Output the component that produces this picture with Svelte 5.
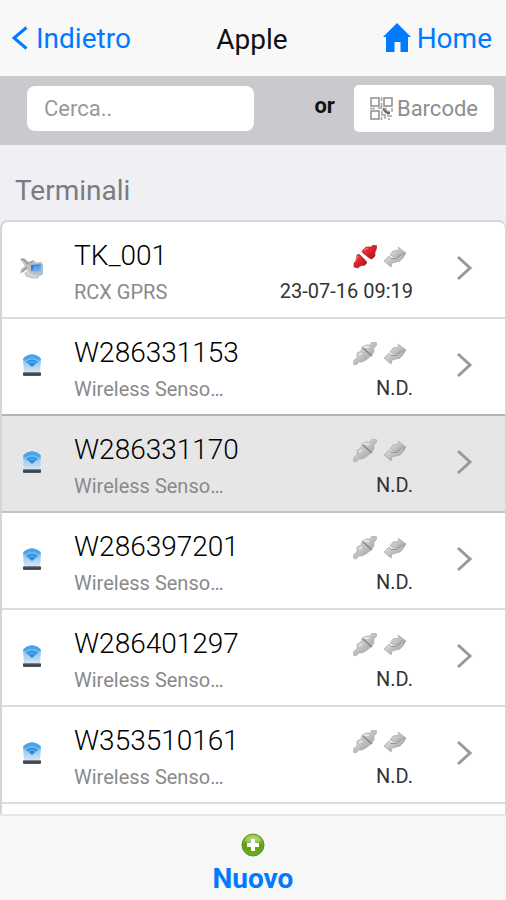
<script>
  const terminals = [
    { name: 'TK_001', type: 'RCX GPRS', seen: '23-07-16 09:19', gprs: true },
    { name: 'W286331153', type: 'Wireless Senso…', seen: 'N.D.' },
    { name: 'W286331170', type: 'Wireless Senso…', seen: 'N.D.', active: true },
    { name: 'W286397201', type: 'Wireless Senso…', seen: 'N.D.' },
    { name: 'W286401297', type: 'Wireless Senso…', seen: 'N.D.' },
    { name: 'W353510161', type: 'Wireless Senso…', seen: 'N.D.' }
  ];
</script>

<svg class="defs" width="0" height="0" aria-hidden="true">
  <defs>
    <linearGradient id="silver" x1="0" y1="0" x2="1" y2="1">
      <stop offset="0" stop-color="#e6e6e6" />
      <stop offset="0.5" stop-color="#c0c0c0" />
      <stop offset="1" stop-color="#8c8c8c" />
    </linearGradient>
    <linearGradient id="red" x1="0" y1="0" x2="1" y2="1">
      <stop offset="0" stop-color="#f0505c" />
      <stop offset="0.5" stop-color="#d8202c" />
      <stop offset="1" stop-color="#a81420" />
    </linearGradient>
    <linearGradient id="sky" x1="0" y1="0" x2="0" y2="1">
      <stop offset="0" stop-color="#3b9de8" />
      <stop offset="0.4" stop-color="#8cc8f4" />
      <stop offset="1" stop-color="#dde8f2" />
    </linearGradient>
    <linearGradient id="base" x1="0" y1="0" x2="0" y2="1">
      <stop offset="0" stop-color="#8f979f" />
      <stop offset="0.5" stop-color="#33383e" />
      <stop offset="1" stop-color="#5c6268" />
    </linearGradient>
    <linearGradient id="screen" x1="0" y1="0" x2="1" y2="1">
      <stop offset="0" stop-color="#1d68cc" />
      <stop offset="1" stop-color="#8cc4f4" />
    </linearGradient>
    <linearGradient id="green" x1="0" y1="0" x2="0" y2="1">
      <stop offset="0" stop-color="#a9cf5c" />
      <stop offset="0.5" stop-color="#5f9e16" />
      <stop offset="1" stop-color="#6fae1c" />
    </linearGradient>
  </defs>
</svg>

<div class="page">
  <header>
    <a class="nav" href="#back">
      <svg width="16" height="26" viewBox="0 0 16 26"><path d="M14.500 1.500 2 12l12.500 10.500" fill="none" stroke="#007aff" stroke-width="3" /></svg>
      Indietro
    </a>
    <h1>Apple</h1>
    <a class="nav home" href="#home">
      <svg width="28" height="32" viewBox="0 0 28 32"><path d="M14 0 28 14H25V29H17.500V19H11.500V29H3V14H0Z" fill="#007aff" /></svg>
      Home
    </a>
  </header>

  <form class="tools">
    <input type="search" placeholder="Cerca.." aria-label="Cerca" />
    <span>or</span>
    <button type="button" class="barcode">
      <svg width="23" height="23" viewBox="0 0 23 23" fill="none" stroke="#8d8d8d" stroke-width="1.500">
        <path d="M1 1h8v8H1ZM14 1h8v8h-8ZM1 14h8v8H1Z" />
        <path d="M11.500 0v4M11.500 6v5H8M13 11.500h3v3h4M22 11v4M12 14v4h3v4M18 17v2h4M18 22h2M0 11.500h5M11.500 20v3" stroke="#a4a4a4" />
        <path d="M13 12l4 4M17 16h3" stroke="#666" stroke-width="2" />
      </svg>
      Barcode
    </button>
  </form>

  <main>
    <h2>Terminali</h2>
    <ul>
      {#each terminals as t}
        <li class:active={t.active}>
          <a class="row" href="#{t.name}">
            <span class="device">
              {#if t.gprs}
                <svg width="24" height="24" viewBox="0 0 24 24">
                  <path d="M0 3 4 2 9 6 13 4 16 6 12 10 11 14 6 14 0 18 1 13 5 10Z" fill="#c3c3c0" />
                  <path d="M1 3 4 4 8 8 13 5M2 16 7 11" fill="none" stroke="#8f908a" stroke-width="1.200" />
                  <path d="M5 17 10 14 19 18 18 22 13 22 6 20Z" fill="#d3d5d4" stroke="#b3b5b4" stroke-width="0.800" />
                  <path d="M9 7 21 6 23 8 23 18 20 20 10 17Z" fill="#b4bfca" />
                  <path d="M11 9 21 8V16L11 15Z" fill="url(#screen)" />
                  <path d="M15 10V14M12 15 16 16" stroke="#8fc0ee" stroke-width="1" />
                </svg>
              {:else}
                <svg width="24" height="24" viewBox="0 0 24 24">
                  <path d="M3 6C7 0 17 0 21 6L20 20H4Z" fill="url(#sky)" />
                  <path d="M3 6C7 0 17 0 21 6L19 8C15 4 9 4 5 8Z" fill="#48a7ec" />
                  <path d="M6 9C10 6 14 6 18 9L12 14Z" fill="#328bdc" />
                  <path d="M8 10.500C11 8.500 13 8.500 16 10.500" fill="none" stroke="#6db6ee" />
                  <rect x="3" y="19" width="18" height="4" rx="1" fill="url(#base)" />
                </svg>
              {/if}
            </span>
            <span class="text">
              <strong>{t.name}</strong>
              <small>{t.type}</small>
            </span>
            <span class="status">
              <span class="icons">
                {#if t.gprs}
                  <svg width="24" height="24" viewBox="0 0 24 24" fill="url(#red)" stroke="#a51822" stroke-width="0.600">
                    <path d="M10 5 13 2 18 2 20 0 24 1 23 5 22 7 22 11 19 14Q17 14 15 12L10 8Q8 6 10 5Z" />
                    <path d="M4 10Q6 8 8 11L13 16Q15 18 12 20L7 21 5 23 1 22 1 18 3 16Z" />
                    <path d="M11 5 15 3M5 11 3 15" stroke="#f4747c" stroke-width="1.300" />
                  </svg>
                {:else}
                  <svg width="24" height="24" viewBox="0 0 24 24" fill="url(#silver)" stroke="#b0b0b0" stroke-width="0.700">
                    <path d="M9 5 13 3 17 3 19 0 23 0 24 3 21 6 21 10 18 14 13 18 9 20 6 20 3 23 0 22 1 18 4 16 4 11 8 9Z" />
                    <path d="M10 6 19 14" fill="none" stroke="#858585" stroke-width="1.500" />
                    <path d="M11 5 16 5M6 13 9 11" fill="none" stroke="#f0f0f0" stroke-width="1.500" />
                  </svg>
                {/if}
                <svg width="24" height="24" viewBox="0 0 24 24" fill="url(#silver)" stroke="#a6a6a6" stroke-width="0.700">
                  <path d="M7 10 10 6 16 5 15 2 23 8 19 14 17 11 11 12Z" />
                  <path d="M1 16 6 11 8 13 13 13 18 9 21 11 17 16 9 18 8 22Z" />
                  <path d="M8 13.500 13 13.500 18 10" fill="none" stroke="#808080" />
                </svg>
              </span>
              <time>{t.seen}</time>
            </span>
            <svg class="chevron" width="18" height="30" viewBox="0 0 18 30"><path d="M2 2 14 13 2 24" fill="none" stroke="#999" stroke-width="3" /></svg>
          </a>
        </li>
      {/each}
    </ul>
  </main>

  <footer>
    <button type="button" class="new">
      <svg width="24" height="24" viewBox="0 0 24 24">
        <circle cx="12" cy="12" r="11" fill="url(#green)" stroke="#5c941c" />
        <path d="M4 8C7 2 17 2 20 8 15 11 9 11 4 8Z" fill="#fff" opacity="0.300" />
        <path d="M12 6V18M6 12H18" stroke="#fff" stroke-width="4" />
      </svg>
      Nuovo
    </button>
  </footer>
</div>

<style>
  :global(body) {
    margin: 0;
  }
  .page,
  .page * {
    box-sizing: border-box;
  }
  .defs {
    position: absolute;
  }
  .page {
    display: flex;
    flex-direction: column;
    height: 100vh;
    font: 400 28px/36px Roboto, 'Liberation Sans', sans-serif;
    color: #111;
    background: #efeff4;
  }
  svg {
    display: block;
    flex: none;
  }
  a {
    color: inherit;
    text-decoration: none;
  }
  header {
    flex: none;
    display: grid;
    grid-template-columns: 1fr auto 1fr;
    align-items: center;
    height: 76px;
    padding: 4px 14px 0 12px;
    background: #f8f8f8;
  }
  .nav {
    display: flex;
    align-items: center;
    gap: 8px;
    padding-bottom: 2px;
    color: #007aff;
  }
  .home {
    justify-self: end;
    gap: 6px;
  }
  h1,
  h2 {
    margin: 0;
    font-size: 28px;
    font-weight: 400;
  }
  .tools {
    flex: none;
    display: flex;
    align-items: center;
    height: 69px;
    padding: 0 12px 4px 27px;
    background: #c9c9ce;
    font-size: 22px;
  }
  .tools input {
    flex: 0 1 227px;
    min-width: 0;
    height: 45px;
    padding: 0 17px;
    border: 0;
    border-radius: 8px;
    background: #fff;
    font: inherit;
    appearance: none;
  }
  .tools input::placeholder {
    color: #999;
    opacity: 1;
  }
  .tools span {
    margin-left: auto;
    padding: 0 19px 6px 0;
    font-weight: 700;
  }
  .barcode {
    display: flex;
    align-items: center;
    gap: 4px;
    height: 47px;
    padding: 0 16px;
    border: 0;
    border-radius: 5px;
    background: #fff;
    color: #8e8e8e;
    font: inherit;
  }
  main {
    flex: 1;
    display: flex;
    flex-direction: column;
    min-height: 0;
    overflow: hidden;
  }
  h2 {
    flex: none;
    padding: 28px 15px 11px;
    color: #7b7b80;
  }
  ul {
    flex: 1 0 auto;
    margin: 0;
    padding: 0;
    list-style: none;
    background: #fff;
    border: 2px solid #d6d6d9;
    border-width: 2px 1px 0 2px;
    border-radius: 8px 8px 0 0;
  }
  li {
    height: 97px;
    border-bottom: 2px solid #dcdcdc;
  }
  .active {
    margin-top: -2px;
    height: 99px;
    background: #e6e6e6;
    border-top: 2px solid #b4b4b4;
    border-bottom-color: #c2c2c2;
  }
  .row {
    display: flex;
    align-items: center;
    height: 95px;
    padding: 0 31px 0 18px;
  }
  .device {
    width: 54px;
    padding-bottom: 4px;
  }
  .text {
    flex: 1;
    display: flex;
    flex-direction: column;
    gap: 4px;
    min-width: 0;
    padding-top: 4px;
  }
  strong {
    font-weight: 300;
    line-height: 36px;
    color: #000;
  }
  small {
    color: #8a8a8a;
    font-size: 20px;
    line-height: 28px;
  }
  .status {
    display: flex;
    flex-direction: column;
    align-items: flex-end;
    gap: 8px;
    padding-top: 10px;
  }
  .icons {
    display: flex;
    gap: 6px;
    padding-right: 6px;
  }
  time {
    color: #333;
    font-size: 20px;
    line-height: 28px;
  }
  .chevron {
    margin-left: 43px;
  }
  footer {
    flex: none;
    display: flex;
    justify-content: center;
    height: 86px;
    border-top: 2px solid #e6e6e6;
    background: #f7f7f7;
  }
  .new {
    display: flex;
    flex-direction: column;
    align-items: center;
    gap: 4px;
    padding: 17px 24px 0;
    border: 0;
    background: none;
    color: #007aff;
    font: inherit;
    font-weight: 700;
  }
</style>
